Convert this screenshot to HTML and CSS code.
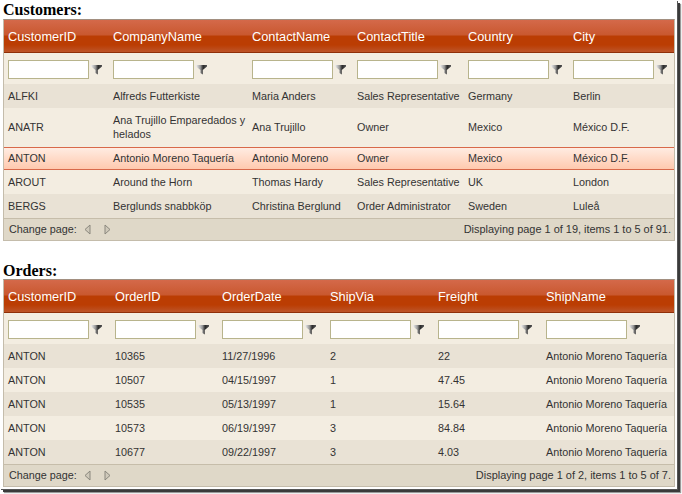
FILE: index.html
```html
<!DOCTYPE html>
<html lang="en">
<head>
<meta charset="utf-8">
<title>Customers and Orders</title>
<link rel="stylesheet" href="styles.css">
</head>
<body>
<svg class="defs" width="0" height="0" aria-hidden="true">
  <defs>
    <linearGradient id="fg" x1="0" x2="1" y1="0" y2="0"><stop offset="0" stop-color="#f2f2f2"/><stop offset=".4" stop-color="#999"/><stop offset=".65" stop-color="#2a2a2a"/><stop offset="1" stop-color="#555"/></linearGradient>
    <symbol id="funnel" viewBox="0 0 11 11"><path d="M0 1H11V2.5L6.8 6V10.5L4.4 9V6L0 2.5Z" fill="url(#fg)"/></symbol>
    <symbol id="prev" viewBox="0 0 7 11"><path d="M6 1V10L1 5.5Z" fill="#cfc9ba" stroke="#8b887e"/></symbol>
    <symbol id="next" viewBox="0 0 7 11"><path d="M1 1V10L6 5.5Z" fill="#cfc9ba" stroke="#8b887e"/></symbol>
  </defs>
</svg>
<main class="window">
  <h2 class="title">Customers:</h2>
  <section class="grid">
    <table class="table customers">
      <colgroup><col class="c1"><col class="c2"><col class="c3"><col class="c4"><col class="c5"><col></colgroup>
      <thead>
        <tr class="head"><th>CustomerID</th><th>CompanyName</th><th>ContactName</th><th>ContactTitle</th><th>Country</th><th>City</th></tr>
        <tr class="filters">
          <td><div class="filter"><input class="box"><svg class="fn"><use href="#funnel"/></svg></div></td>
          <td><div class="filter"><input class="box"><svg class="fn"><use href="#funnel"/></svg></div></td>
          <td><div class="filter"><input class="box"><svg class="fn"><use href="#funnel"/></svg></div></td>
          <td><div class="filter"><input class="box"><svg class="fn"><use href="#funnel"/></svg></div></td>
          <td><div class="filter"><input class="box"><svg class="fn"><use href="#funnel"/></svg></div></td>
          <td><div class="filter"><input class="box"><svg class="fn"><use href="#funnel"/></svg></div></td>
        </tr>
      </thead>
      <tbody>
        <tr class="row alt"><td>ALFKI</td><td>Alfreds Futterkiste</td><td>Maria Anders</td><td>Sales Representative</td><td>Germany</td><td>Berlin</td></tr>
        <tr class="row tall"><td>ANATR</td><td>Ana Trujillo Emparedados y helados</td><td>Ana Trujillo</td><td>Owner</td><td>Mexico</td><td>México D.F.</td></tr>
        <tr class="row selected"><td>ANTON</td><td>Antonio Moreno Taquería</td><td>Antonio Moreno</td><td>Owner</td><td>Mexico</td><td>México D.F.</td></tr>
        <tr class="row"><td>AROUT</td><td>Around the Horn</td><td>Thomas Hardy</td><td>Sales Representative</td><td>UK</td><td>London</td></tr>
        <tr class="row alt"><td>BERGS</td><td>Berglunds snabbköp</td><td>Christina Berglund</td><td>Order Administrator</td><td>Sweden</td><td>Luleå</td></tr>
      </tbody>
    </table>
    <div class="pager">
      <div class="pager-left"><span>Change page:</span><svg class="arrow"><use href="#prev"/></svg><svg class="arrow"><use href="#next"/></svg></div>
      <span class="pager-info">Displaying page 1 of 19, items 1 to 5 of 91.</span>
    </div>
  </section>
  <h2 class="title second">Orders:</h2>
  <section class="grid">
    <table class="table orders">
      <colgroup><col class="o1"><col class="o2"><col class="o3"><col class="o4"><col class="o5"><col></colgroup>
      <thead>
        <tr class="head"><th>CustomerID</th><th>OrderID</th><th>OrderDate</th><th>ShipVia</th><th>Freight</th><th>ShipName</th></tr>
        <tr class="filters">
          <td><div class="filter"><input class="box"><svg class="fn"><use href="#funnel"/></svg></div></td>
          <td><div class="filter"><input class="box"><svg class="fn"><use href="#funnel"/></svg></div></td>
          <td><div class="filter"><input class="box"><svg class="fn"><use href="#funnel"/></svg></div></td>
          <td><div class="filter"><input class="box"><svg class="fn"><use href="#funnel"/></svg></div></td>
          <td><div class="filter"><input class="box"><svg class="fn"><use href="#funnel"/></svg></div></td>
          <td><div class="filter"><input class="box"><svg class="fn"><use href="#funnel"/></svg></div></td>
        </tr>
      </thead>
      <tbody>
        <tr class="row alt"><td>ANTON</td><td>10365</td><td>11/27/1996</td><td>2</td><td>22</td><td>Antonio Moreno Taquería</td></tr>
        <tr class="row"><td>ANTON</td><td>10507</td><td>04/15/1997</td><td>1</td><td>47.45</td><td>Antonio Moreno Taquería</td></tr>
        <tr class="row alt"><td>ANTON</td><td>10535</td><td>05/13/1997</td><td>1</td><td>15.64</td><td>Antonio Moreno Taquería</td></tr>
        <tr class="row"><td>ANTON</td><td>10573</td><td>06/19/1997</td><td>3</td><td>84.84</td><td>Antonio Moreno Taquería</td></tr>
        <tr class="row alt"><td>ANTON</td><td>10677</td><td>09/22/1997</td><td>3</td><td>4.03</td><td>Antonio Moreno Taquería</td></tr>
      </tbody>
    </table>
    <div class="pager">
      <div class="pager-left"><span>Change page:</span><svg class="arrow"><use href="#prev"/></svg><svg class="arrow"><use href="#next"/></svg></div>
      <span class="pager-info">Displaying page 1 of 2, items 1 to 5 of 7.</span>
    </div>
  </section>
</main>
</body>
</html>
```

FILE: styles.css
```css
* { box-sizing: border-box; }
html, body { margin: 0; height: 100%; background: #fff; overflow: hidden; }
.defs { display: block; height: 0; }
.window {
  width: 677px;
  height: 489px;
  padding: 3px 2px 0 3px;
  background: #fff;
  box-shadow: 1px 1px 0 #555, 3px 3px 0 #3a3a3a, 4px 4px 1px #999;
}
.title {
  margin: 0;
  height: 16px;
  font: bold 16px/14px "Liberation Serif", "Times New Roman", serif;
  color: #000;
}
.title.second { margin-top: 23px; height: 15px; }
.grid {
  width: 672px;
  border: 1px solid #c4bcab;
  border-top-color: #a28f80;
  background: #f3ede1;
  font: 10.8px/14px "Liberation Sans", Arial, sans-serif;
  color: #333;
}
.table { width: 100%; border-collapse: separate; border-spacing: 0; table-layout: fixed; }
.c1 { width: 105px; } .c2 { width: 139px; } .c3 { width: 105px; } .c4 { width: 111px; } .c5 { width: 105px; }
.o1 { width: 107px; } .o2 { width: 107px; } .o3 { width: 108px; } .o4 { width: 108px; } .o5 { width: 108px; }
.head th {
  height: 33px;
  padding: 2px 4px 0;
  border-bottom: 1px solid #8f2f08;
  text-align: left;
  font: 400 12.8px/16px "Liberation Sans", Arial, sans-serif;
  color: #fff;
  background: linear-gradient(#d4694a 0, #c9582f 47%, #bb3d03 50%, #bb3d03 78%, #bd5428 100%);
}
.filters td { height: 31px; padding: 2px 4px 0; background: #f3ede1; }
.filter { display: flex; align-items: center; gap: 2px; }
.box {
  width: 81px;
  height: 19px;
  padding: 0;
  border: 1px solid #b8b48c;
  background: #fff;
  flex: none;
}
.fn { width: 11px; height: 11px; flex: none; margin-top: -1px; }
.row td { height: 24px; padding: 0 0 0 4px; vertical-align: middle; }
.row { background: #f3ede1; }
.row.alt { background: #e9e2d5; }
.row.tall td { height: 39px; padding-bottom: 2px; }
.row.selected td {
  height: 23px;
  padding-bottom: 2px;
  background: linear-gradient(#ffece2, #ffc9ae);
  border-top: 1px solid #d8694a;
  border-bottom: 1px solid #d8694a;
}
.pager {
  display: flex;
  justify-content: space-between;
  align-items: center;
  height: 22px;
  padding: 0 3px 1px 5px;
  border-top: 1px solid #c6bdaa;
  background: #dfd8c8;
  color: #333;
}
.pager-left { display: flex; align-items: center; }
.pager-info { font-size: 10.95px; }
.arrow { width: 7px; height: 11px; flex: none; }
.arrow:first-of-type { margin-left: 7px; }
.arrow + .arrow { margin-left: 13px; }
```
